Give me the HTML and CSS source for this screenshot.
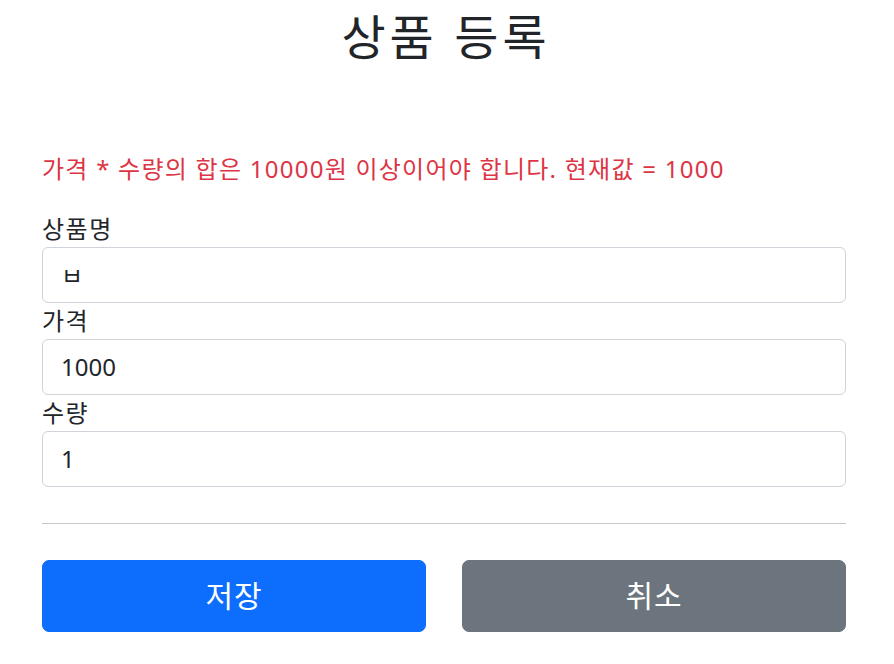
FILE: index.html
```html
<!DOCTYPE html>
<html lang="ko">
<head>
<meta charset="utf-8">
<title>상품 등록</title>
<link rel="stylesheet" href="styles.css">
</head>
<body>
<div class="container">
  <div class="header">
    <h2 class="title">상품 등록</h2>
  </div>
  <p class="field-error">가격 * 수량의 합은 10000원 이상이어야 합니다. 현재값 = 1000</p>
  <form class="form">
    <div class="group">
      <label class="label" for="itemName">상품명</label>
      <input class="control" id="itemName" type="text" value="ㅂ">
    </div>
    <div class="group">
      <label class="label" for="price">가격</label>
      <input class="control" id="price" type="text" value="1000">
    </div>
    <div class="group">
      <label class="label" for="quantity">수량</label>
      <input class="control" id="quantity" type="text" value="1">
    </div>
    <hr class="divider">
    <div class="actions">
      <button class="btn btn-primary" type="button">저장</button>
      <button class="btn btn-secondary" type="button">취소</button>
    </div>
  </form>
</div>
</body>
</html>
```

FILE: styles.css
```css
* { box-sizing: border-box; }

body {
  margin: 0;
  font-family: "Noto Sans", "Noto Sans CJK KR", sans-serif;
  font-size: 24px;
  line-height: 1.5;
  color: #212529;
  background: #fff;
}

.container {
  width: 804px;
  margin-left: 42px;
}

.header {
  text-align: center;
  padding: 8px 0 73px;
}

.title {
  margin: 0 0 12px;
  font-size: 48px;
  font-weight: 400;
  line-height: 1.2;
  letter-spacing: 4px;
  text-indent: 4px;
}

.field-error {
  margin: 0 0 24px;
  color: #dc3545;
  letter-spacing: 1.25px;
}

.form { margin: 0; }

.group { display: flex; flex-direction: column; }

.label {
  display: block;
  line-height: 36px;
  letter-spacing: 1.5px;
}

.control {
  display: block;
  width: 100%;
  height: 56px;
  padding: 0 18px;
  font: inherit;
  font-size: 24px;
  color: #212529;
  background: #fff;
  border: 1px solid #ced4da;
  border-radius: 6px;
  outline: none;
}

.divider {
  margin: 36px 0;
  border: 0;
  border-top: 1px solid #c8c9ca;
  height: 0;
}

.actions {
  display: grid;
  grid-template-columns: 1fr 1fr;
  column-gap: 36px;
}

.btn {
  height: 72px;
  font: inherit;
  font-size: 30px;
  letter-spacing: 1px;
  color: #fff;
  border: 1px solid transparent;
  border-radius: 7px;
  cursor: pointer;
}

.btn-primary { background: #0d6efd; border-color: #0d6efd; }
.btn-secondary { background: #6c757d; border-color: #6c757d; }
```
